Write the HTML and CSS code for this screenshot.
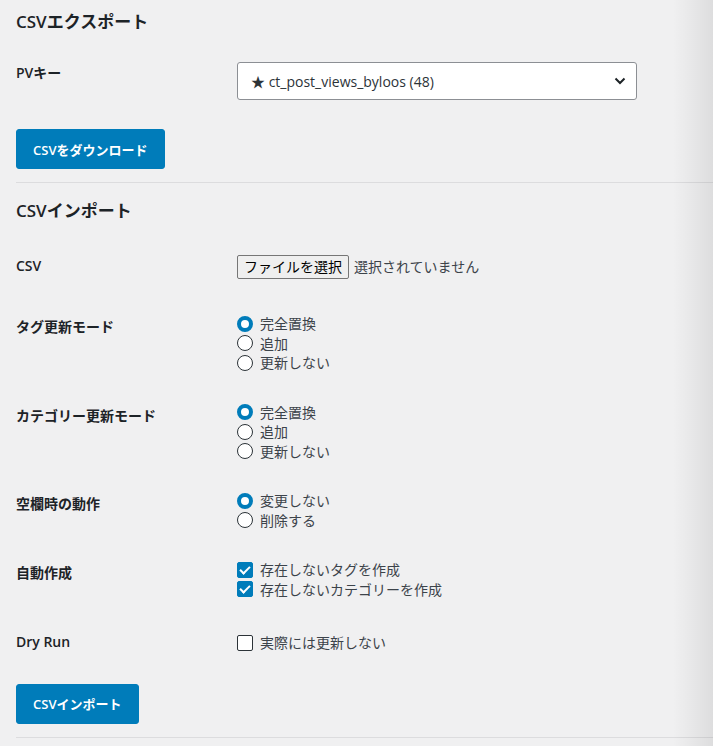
FILE: index.html
```html
<!DOCTYPE html>
<html lang="ja">
<head>
    <meta charset="UTF-8">
    <title>CSVエクスポート / インポート</title>
    <meta name="viewport" content="width=device-width, initial-scale=1.0">
    <link rel="stylesheet" href="styles.css">
</head>
<body>
    <div class="wrap">
        <div class="section">
            <h2>CSVエクスポート</h2>
            <div class="row">
                <div class="th">PVキー</div>
                <div class="td">
                    <div class="select">
                        <span>★ ct_post_views_byloos (48)</span>
                        <svg width="12" height="8" viewBox="0 0 12 8"><path d="M1.5 1.5 L6 6 L10.5 1.5" fill="none" stroke="#1d2327" stroke-width="2"/></svg>
                    </div>
                </div>
            </div>
            <p class="submit submit-export"><button class="button">CSVをダウンロード</button></p>
        </div>
        <div class="section">
            <h2 class="import-title">CSVインポート</h2>
            <div class="row">
                <div class="th">CSV</div>
                <div class="td">
                    <div class="file">
                        <span class="file-button">ファイルを選択</span>
                        <span class="file-name">選択されていません</span>
                    </div>
                </div>
            </div>
            <div class="row">
                <div class="th">タグ更新モード</div>
                <div class="td">
                    <label class="opt"><span class="radio checked"></span>完全置換</label>
                    <label class="opt"><span class="radio"></span>追加</label>
                    <label class="opt"><span class="radio"></span>更新しない</label>
                </div>
            </div>
            <div class="row">
                <div class="th">カテゴリー更新モード</div>
                <div class="td">
                    <label class="opt"><span class="radio checked"></span>完全置換</label>
                    <label class="opt"><span class="radio"></span>追加</label>
                    <label class="opt"><span class="radio"></span>更新しない</label>
                </div>
            </div>
            <div class="row">
                <div class="th">空欄時の動作</div>
                <div class="td">
                    <label class="opt"><span class="radio checked"></span>変更しない</label>
                    <label class="opt"><span class="radio"></span>削除する</label>
                </div>
            </div>
            <div class="row">
                <div class="th">自動作成</div>
                <div class="td">
                    <label class="opt"><span class="check checked"></span>存在しないタグを作成</label>
                    <label class="opt"><span class="check checked"></span>存在しないカテゴリーを作成</label>
                </div>
            </div>
            <div class="row">
                <div class="th">Dry Run</div>
                <div class="td">
                    <label class="opt opt-single"><span class="check"></span>実際には更新しない</label>
                </div>
            </div>
            <p class="submit submit-import"><button class="button">CSVインポート</button></p>
        </div>
    </div>
    <div class="edge-shadow"></div>
</body>
</html>
```

FILE: styles.css
```css
* {
    box-sizing: border-box;
}
html, body {
    margin: 0;
    padding: 0;
}
body {
    background: #f0f0f1;
    color: #3c434a;
    font-family: "Open Sans", "Noto Sans CJK JP", sans-serif;
    font-size: 14px;
    overflow: hidden;
}
.wrap {
    padding-left: 16px;
}
.section {
    border-bottom: 1px solid #dcdcde;
}
h2 {
    font-size: 17px;
    font-weight: 600;
    line-height: 22px;
    color: #1d2327;
    margin: 11px 0 12px;
}
.import-title {
    margin: 17px 0 16px;
}
.row {
    display: grid;
    grid-template-columns: 221px 1fr;
}
.th {
    padding: 18px 10px 0 0;
    font-weight: 600;
    color: #1d2327;
    line-height: 19.5px;
}
.td {
    padding: 15px 0;
}
.select {
    width: 400px;
    height: 38px;
    margin-top: 2px;
    background: #fff;
    border: 1px solid #8c8f94;
    border-radius: 3px;
    display: flex;
    align-items: center;
    justify-content: space-between;
    padding: 0 10px 0 13px;
    color: #2c3338;
}
.submit {
    margin: 14px 0 13px;
}
.submit-import {
    margin: 16px 0 13px;
}
.button {
    font-family: inherit;
    font-size: 13px;
    font-weight: 600;
    color: #fff;
    background: #007cba;
    border: 1px solid #007cba;
    border-radius: 3px;
    height: 40px;
    padding: 0 16px;
}
.file {
    height: 31px;
    display: flex;
    align-items: flex-start;
    padding-top: 2px;
}
.file-button {
    display: inline-block;
    height: 24px;
    line-height: 22px;
    padding: 0 6px;
    background: #efefef;
    border: 1px solid #767676;
    border-radius: 2px;
    color: #000;
}
.file-name {
    margin-left: 5px;
    line-height: 24px;
    color: #3c434a;
}
.opt {
    display: flex;
    align-items: center;
    line-height: 19.5px;
    height: 19.5px;
}
.opt-single {
    margin-top: 4px;
}
.radio {
    width: 16px;
    height: 16px;
    border: 1.5px solid #2c3338;
    border-radius: 50%;
    background: #fff;
    margin-right: 7px;
    flex: none;
}
.radio.checked {
    border: 4px solid #007cba;
}
.check {
    width: 16px;
    height: 16px;
    border: 1.5px solid #2c3338;
    border-radius: 2px;
    background: #fff;
    margin-right: 7px;
    flex: none;
    position: relative;
}
.check.checked {
    background: #007cba;
    border-color: #007cba;
}
.check.checked::after {
    content: "";
    position: absolute;
    left: 4px;
    top: 1px;
    width: 4px;
    height: 8px;
    border: solid #fff;
    border-width: 0 2px 2px 0;
    transform: rotate(45deg);
}
.edge-shadow {
    position: absolute;
    top: 0;
    right: 0;
    width: 40px;
    height: 100%;
    pointer-events: none;
    background: linear-gradient(to right, rgba(0, 0, 0, 0), rgba(0, 0, 0, 0.08));
}
```
